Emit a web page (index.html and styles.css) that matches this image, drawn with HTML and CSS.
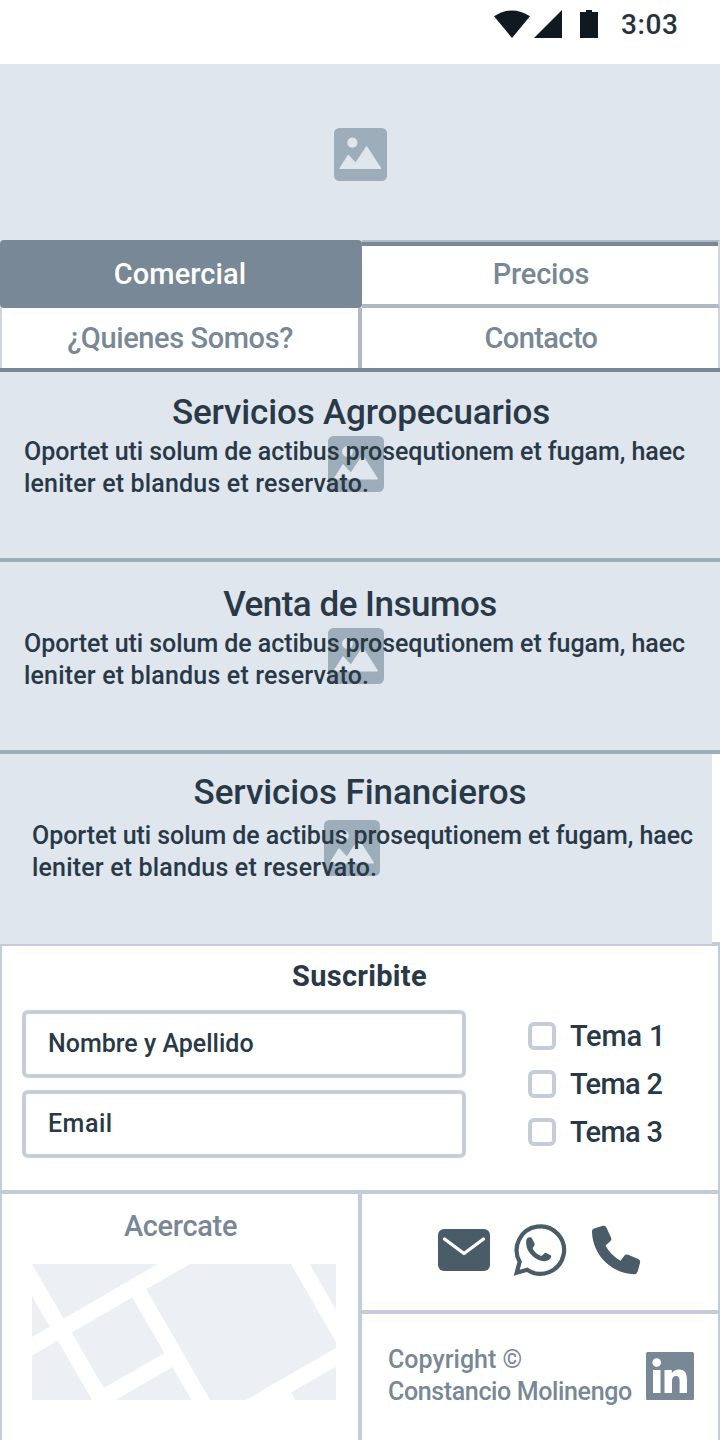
FILE: index.html
```html
<!DOCTYPE html>
<html lang="es">
<head>
<meta charset="utf-8">
<title>Comercial</title>
<link rel="stylesheet" href="styles.css">
</head>
<body>
<svg class="defs" width="0" height="0">
  <symbol id="picture" viewBox="0 0 56 56">
    <rect width="56" height="56" rx="5.5" fill="#9dadb9"/>
    <circle cx="19.4" cy="15.5" r="5.4" fill="#dfe6ee"/>
    <path d="M6.4 42.7 15.1 29 22.9 37.4 34.5 20 49.2 42.7Z" fill="#dfe6ee" stroke="#dfe6ee" stroke-width="1.4" stroke-linejoin="round"/>
  </symbol>
</svg>
<header class="status">
  <svg class="status-icons" width="106" height="30" viewBox="0 0 106 30" fill="#101820">
    <path d="M0 6.2Q18-5.2 36 6.2L18 28Z"/>
    <path d="M40 28 68 0V28Z"/>
    <path d="M86 2H92V0H98V2H104V28H86Z"/>
  </svg>
  <span class="clock">3:03</span>
</header>
<div class="hero"><svg class="hero-icon"><use href="#picture"/></svg></div>
<nav class="tabs">
  <a class="tab tab-active">Comercial</a>
  <a class="tab tab-precios">Precios</a>
  <a class="tab tab-quienes">¿Quienes Somos?</a>
  <a class="tab tab-contacto">Contacto</a>
</nav>
<main>
  <section class="service service-agro">
    <svg class="service-icon"><use href="#picture"/></svg>
    <h2>Servicios Agropecuarios</h2>
    <p>Oportet uti solum de actibus prosequtionem et fugam, haec<br><span class="line2">leniter et blandus et reservato.</span></p>
  </section>
  <section class="service service-insumos">
    <svg class="service-icon"><use href="#picture"/></svg>
    <h2>Venta de Insumos</h2>
    <p>Oportet uti solum de actibus prosequtionem et fugam, haec<br><span class="line2">leniter et blandus et reservato.</span></p>
  </section>
  <div class="service-row">
    <section class="service service-finanzas">
      <svg class="service-icon"><use href="#picture"/></svg>
      <h2>Servicios Financieros</h2>
      <p>Oportet uti solum de actibus prosequtionem et fugam, haec<br><span class="line2">leniter et blandus et reservato.</span></p>
    </section>
    <div class="service-edge"></div>
  </div>
</main>
<form class="subscribe">
  <h3>Suscribite</h3>
  <div class="form-row">
    <div class="fields">
      <div class="field">Nombre y Apellido</div>
      <div class="field field-email">Email</div>
    </div>
    <div class="topics">
      <label class="topic topic-first"><i class="box"></i>Tema 1</label>
      <label class="topic"><i class="box"></i>Tema 2</label>
      <label class="topic"><i class="box"></i>Tema 3</label>
    </div>
  </div>
</form>
<footer class="footer">
  <section class="visit">
    <h4>Acercate</h4>
    <svg class="map" width="304" height="136" viewBox="0 0 304 136">
      <rect width="304" height="136" fill="#ecf0f5"/>
      <g stroke="#fff" stroke-width="16" fill="none">
        <path d="M-14-8 75 145.500M-16 91.500 160-10.500M103 22 172 141.500M263-9 315 81"/>
        <path d="M62 139 142 93M216 144 320 84M250 129 260 146"/>
      </g>
    </svg>
  </section>
  <div class="side">
    <div class="contact">
      <svg width="204" height="56" viewBox="0 0 204 56">
        <rect y="7" width="52" height="42" rx="6" fill="#4b5c69"/>
        <path d="M6.500 17 26 31.500 45.500 17" fill="none" stroke="#fff" stroke-width="3.300" stroke-linecap="round" stroke-linejoin="round"/>
        <g transform="translate(-.8 -.8)">
          <path d="M79.500 51.500 82.500 40.500A23.700 23.700 0 1 1 90 48.600Z" fill="none" stroke="#4b5c69" stroke-width="4.200"/>
          <path d="M89.500 17.800C91 15.500 94 15.500 95 17.500L97.500 22.500C98 24 95.500 26 95.500 27.500C97.500 31 100.500 33.500 104 34.700C105.500 34.500 107 31.500 108.500 31.500L113.500 34C115.500 35.500 112 40 107 40C98 39.500 89.500 31 89 23C88.900 21 88.800 19.300 89.500 17.800Z" fill="#4b5c69"/>
        </g>
        <path d="M156 6.500 165 3.800Q167.300 3.200 168.400 5.500L173 15.500Q173.900 17.700 172.300 19.200L167.500 23.500Q172.500 33 182.500 38.800L186.500 33.600Q188 32 190.200 32.800L200.200 37Q202.500 38.200 202.100 40.500L199.700 49.500Q198.800 52.300 196 52.200C173 51.500 154.500 32.500 154 9.800Q153.700 7.300 156 6.500Z" fill="#4b5c69"/>
      </svg>
    </div>
    <div class="legal">
      <p>Copyright ©<br><span class="owner">Constancio Molinengo</span></p>
      <svg width="48" height="48" viewBox="0 0 48 48">
        <rect width="48" height="48" rx="1.500" fill="#788896"/>
        <circle cx="10.700" cy="10.500" r="4.300" fill="#fff"/>
        <path d="M7 18H14.500V41H7ZM18.500 18H25.800V21.200C27.500 18.600 30 17.400 33 17.400C39 17.400 41 21.500 41 28V41H33.600V29.500C33.600 26.500 33.200 24 30 24C26.800 24 26 26.500 26 29.500V41H18.500Z" fill="#fff"/>
      </svg>
    </div>
  </div>
</footer>
</body>
</html>
```
FILE: styles.css
```css
* { box-sizing: border-box; margin: 0; padding: 0; }
body { width: 720px; height: 1440px; overflow: hidden; display: flex; flex-direction: column; background: #fff; color: #293947; font-family: Roboto, "Liberation Sans", sans-serif; font-weight: 500; }
.defs { position: absolute; }
svg { display: block; flex: none; }

.status { height: 64px; flex: none; display: flex; justify-content: flex-end; padding: 10px 42px 0 0; }
.status-icons { margin-right: 21px; }
.clock { font-size: 28px; line-height: 29px; letter-spacing: .6px; margin-right: -.6px; color: #28323c; }
.hero { height: 176px; flex: none; background: #dfe6ee; display: flex; justify-content: center; padding-top: 63.5px; }
.hero-icon { width: 53px; height: 53px; }

.tabs { display: grid; grid-template-columns: 362px 358px; grid-template-rows: 68px 60px; background: #dfe6ee; border-bottom: 4px solid #788896; }
.tab { display: flex; justify-content: center; align-items: center; font-size: 29px; line-height: 34px; color: #788896; background: #fff; }
.tab-active { background: #788896; color: #fff; border-radius: 4px; padding-right: 2px; letter-spacing: .08px; }
.tab-precios { border-top: 2px solid #b0bbc5; border-right: 2px solid #cfd5dc; border-bottom: 4px solid #aeb9c2; box-shadow: inset 0 4px #788896; padding-top: 2px; padding-left: 2px; letter-spacing: -.17px; }
.tab-quienes { border-left: 2px solid #cfd5dc; border-right: 4px solid #aeb9c2; letter-spacing: -.4px; }
.tab-contacto { border-right: 2px solid #cfd5dc; padding-left: 2px; letter-spacing: -.6px; }

.service { position: relative; background: #dfe6ee; border-bottom: 4px solid #9dadb9; padding: 0 24px; }
.service-agro { height: 190px; padding-top: 21px; }
.service-insumos { height: 192px; padding-top: 23px; }
.service-row { display: flex; height: 190px; }
.service-finanzas { width: 712px; height: 190px; border: 0; padding: 19px 0 0 32px; }
.service-edge { flex: 1; border-bottom: 2px solid #c2ced9; }
.service-icon { position: absolute; left: 328px; top: 64px; width: 56px; height: 56px; }
.service-insumos .service-icon { top: 66px; }
.service-finanzas .service-icon { left: 324px; top: 66px; }
.service h2 { position: relative; font-size: 35px; line-height: 40px; font-weight: 500; text-align: center; letter-spacing: -.16px; padding-left: 2px; }
.service-insumos h2 { letter-spacing: -.5px; padding-left: 0; }
.service-finanzas h2 { letter-spacing: -.07px; padding: 0 24px 0 0; }
.service p { position: relative; font-size: 25px; line-height: 32px; margin-top: 3px; letter-spacing: -.056px; white-space: nowrap; }
.service-finanzas p { margin-top: 7px; }
.service .line2 { letter-spacing: .168px; }

.subscribe { height: 250px; border: 2px solid #c2ced9; border-bottom-width: 4px; padding: 13px 20px 0; }
.subscribe h3 { font-size: 29px; line-height: 34px; font-weight: 700; text-align: center; letter-spacing: .3px; padding-right: 1px; }
.form-row { display: flex; margin-top: 17px; }
.fields { width: 444px; display: grid; gap: 12px; }
.field { height: 68px; border: 4px solid #c5cdd8; border-radius: 6px; padding: 0 0 2px 22px; display: flex; align-items: center; font-size: 25px; }
.field-email { letter-spacing: .5px; }
.topics { margin: 2px 0 0 62px; }
.topic { display: flex; align-items: center; height: 48px; gap: 14px; font-size: 29px; letter-spacing: -.7px; }
.topic-first { letter-spacing: -.2px; }
.box { width: 28px; height: 28px; border: 4px solid #c5cdd8; border-radius: 6px; }

.footer { height: 246px; display: flex; }
.visit { width: 362px; border-left: 2px solid #c2ced9; border-right: 4px solid #c2ced9; padding: 15px 0 0 30px; }
.visit h4 { width: 297px; font-size: 29px; line-height: 34px; font-weight: 500; color: #788896; text-align: center; letter-spacing: -.33px; margin-bottom: 21px; }
.side { flex: 1; border-right: 2px solid #c2ced9; color: #788896; }
.contact { height: 120px; border-bottom: 4px solid #c2ced9; padding: 28px 0 0 76px; }
.legal { display: flex; padding: 30px 0 0 26px; }
.legal p { width: 258px; font-size: 25px; line-height: 32px; }
.owner { letter-spacing: -.37px; }
.legal svg { margin-top: 8px; }
```
